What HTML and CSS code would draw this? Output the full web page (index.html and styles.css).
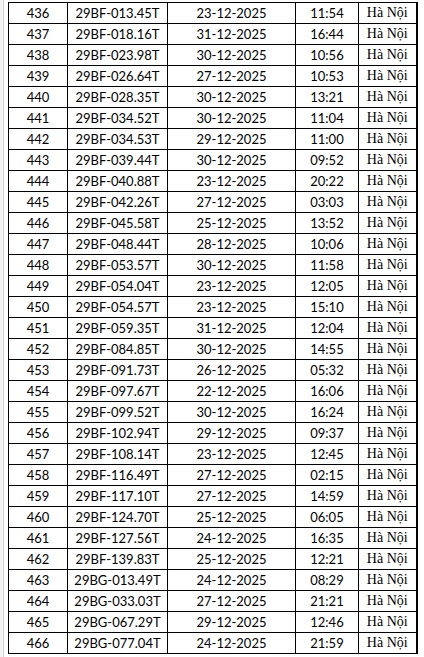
FILE: index.html
```html
<!DOCTYPE html>
<html>
<head>
<meta charset="utf-8">
<link rel="stylesheet" href="styles.css">
</head>
<body>
<div class="sheet">
  <div class="rowhead"></div>
  <table class="grid">
    <colgroup>
      <col class="c-no"><col class="c-plate"><col class="c-date"><col class="c-time"><col class="c-city">
    </colgroup>
    <tbody>
      <tr><td>436</td><td>29BF-013.45T</td><td>23-12-2025</td><td>11:54</td><td class="city">Hà Nội</td></tr>
      <tr><td>437</td><td>29BF-018.16T</td><td>31-12-2025</td><td>16:44</td><td class="city">Hà Nội</td></tr>
      <tr><td>438</td><td>29BF-023.98T</td><td>30-12-2025</td><td>10:56</td><td class="city">Hà Nội</td></tr>
      <tr><td>439</td><td>29BF-026.64T</td><td>27-12-2025</td><td>10:53</td><td class="city">Hà Nội</td></tr>
      <tr><td>440</td><td>29BF-028.35T</td><td>30-12-2025</td><td>13:21</td><td class="city">Hà Nội</td></tr>
      <tr><td>441</td><td>29BF-034.52T</td><td>30-12-2025</td><td>11:04</td><td class="city">Hà Nội</td></tr>
      <tr><td>442</td><td>29BF-034.53T</td><td>29-12-2025</td><td>11:00</td><td class="city">Hà Nội</td></tr>
      <tr><td>443</td><td>29BF-039.44T</td><td>30-12-2025</td><td>09:52</td><td class="city">Hà Nội</td></tr>
      <tr><td>444</td><td>29BF-040.88T</td><td>23-12-2025</td><td>20:22</td><td class="city">Hà Nội</td></tr>
      <tr><td>445</td><td>29BF-042.26T</td><td>27-12-2025</td><td>03:03</td><td class="city">Hà Nội</td></tr>
      <tr><td>446</td><td>29BF-045.58T</td><td>25-12-2025</td><td>13:52</td><td class="city">Hà Nội</td></tr>
      <tr><td>447</td><td>29BF-048.44T</td><td>28-12-2025</td><td>10:06</td><td class="city">Hà Nội</td></tr>
      <tr><td>448</td><td>29BF-053.57T</td><td>30-12-2025</td><td>11:58</td><td class="city">Hà Nội</td></tr>
      <tr><td>449</td><td>29BF-054.04T</td><td>23-12-2025</td><td>12:05</td><td class="city">Hà Nội</td></tr>
      <tr><td>450</td><td>29BF-054.57T</td><td>23-12-2025</td><td>15:10</td><td class="city">Hà Nội</td></tr>
      <tr><td>451</td><td>29BF-059.35T</td><td>31-12-2025</td><td>12:04</td><td class="city">Hà Nội</td></tr>
      <tr><td>452</td><td>29BF-084.85T</td><td>30-12-2025</td><td>14:55</td><td class="city">Hà Nội</td></tr>
      <tr><td>453</td><td>29BF-091.73T</td><td>26-12-2025</td><td>05:32</td><td class="city">Hà Nội</td></tr>
      <tr><td>454</td><td>29BF-097.67T</td><td>22-12-2025</td><td>16:06</td><td class="city">Hà Nội</td></tr>
      <tr><td>455</td><td>29BF-099.52T</td><td>30-12-2025</td><td>16:24</td><td class="city">Hà Nội</td></tr>
      <tr><td>456</td><td>29BF-102.94T</td><td>29-12-2025</td><td>09:37</td><td class="city">Hà Nội</td></tr>
      <tr><td>457</td><td>29BF-108.14T</td><td>23-12-2025</td><td>12:45</td><td class="city">Hà Nội</td></tr>
      <tr><td>458</td><td>29BF-116.49T</td><td>27-12-2025</td><td>02:15</td><td class="city">Hà Nội</td></tr>
      <tr><td>459</td><td>29BF-117.10T</td><td>27-12-2025</td><td>14:59</td><td class="city">Hà Nội</td></tr>
      <tr><td>460</td><td>29BF-124.70T</td><td>25-12-2025</td><td>06:05</td><td class="city">Hà Nội</td></tr>
      <tr><td>461</td><td>29BF-127.56T</td><td>24-12-2025</td><td>16:35</td><td class="city">Hà Nội</td></tr>
      <tr><td>462</td><td>29BF-139.83T</td><td>25-12-2025</td><td>12:21</td><td class="city">Hà Nội</td></tr>
      <tr><td>463</td><td>29BG-013.49T</td><td>24-12-2025</td><td>08:29</td><td class="city">Hà Nội</td></tr>
      <tr><td>464</td><td>29BG-033.03T</td><td>27-12-2025</td><td>21:21</td><td class="city">Hà Nội</td></tr>
      <tr><td>465</td><td>29BG-067.29T</td><td>29-12-2025</td><td>12:46</td><td class="city">Hà Nội</td></tr>
      <tr><td>466</td><td>29BG-077.04T</td><td>24-12-2025</td><td>21:59</td><td class="city">Hà Nội</td></tr>
    </tbody>
  </table>
</div>
</body>
</html>
```

FILE: styles.css
```css
html, body {
  margin: 0;
  padding: 0;
  background: #ffffff;
}
.sheet {
  display: flex;
  align-items: flex-start;
  height: 657px;
  overflow: hidden;
}
.rowhead {
  width: 3px;
  height: 657px;
  background: #f3f3f3;
  border-right: 1px solid #d0d0d0;
  flex: none;
}
.grid {
  margin-left: 4px;
  margin-top: 2px;
  border-collapse: collapse;
  table-layout: fixed;
  width: 408px;
  font-family: Lato, "Liberation Sans", sans-serif;
  font-size: 13px;
  color: #000;
}
.c-no { width: 59px; }
.c-plate { width: 100px; }
.c-date { width: 128px; }
.c-time { width: 63px; }
.c-city { width: 58px; }
.grid tr { height: 21px; }
.grid td {
  border: 1px solid #000;
  padding: 0;
  text-align: center;
  vertical-align: middle;
  line-height: 20px;
  white-space: nowrap;
}
.grid td:last-child { border-right-width: 2px; }
.grid td.city {
  font-family: "Liberation Serif", serif;
  font-size: 14px;
}
```
